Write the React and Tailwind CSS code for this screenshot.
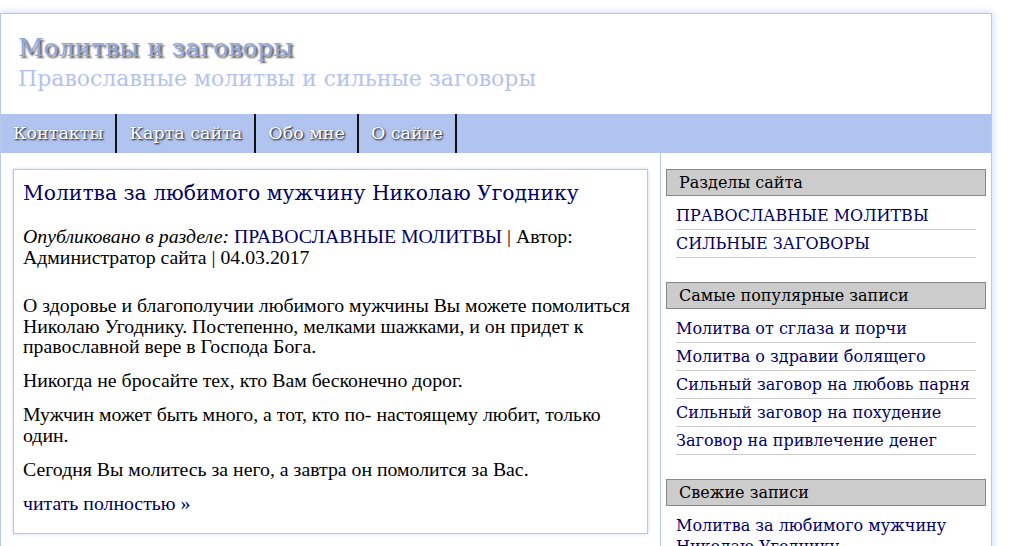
import React from "react";

const serif = { fontFamily: '"DejaVu Serif", serif' };

const navItems = ["Контакты", "Карта сайта", "Обо мне", "О сайте"];

const widgets = [
  { title: "Разделы сайта", links: ["ПРАВОСЛАВНЫЕ МОЛИТВЫ", "СИЛЬНЫЕ ЗАГОВОРЫ"] },
  {
    title: "Самые популярные записи",
    links: [
      "Молитва от сглаза и порчи",
      "Молитва о здравии болящего",
      "Сильный заговор на любовь парня",
      "Сильный заговор на похудение",
      "Заговор на привлечение денег",
    ],
  },
  { title: "Свежие записи", links: ["Молитва за любимого мужчину Николаю Угоднику"] },
];

function Widget({ title, links }) {
  return (
    <div className="mb-[24px]">
      <h3 className="border border-[#888] bg-[#cccccc] px-3 h-[27px] leading-[25px] text-[16px] text-black">
        {title}
      </h3>
      <ul className="px-[10px] pt-[6px]">
        {links.map((l) => (
          <li key={l} className="border-b border-[#cccccc] py-[3px] leading-[21px] text-[16px]">
            <a href="#" className="text-[#000066]">{l}</a>
          </li>
        ))}
      </ul>
    </div>
  );
}

export default function App() {
  return (
    <div className="bg-white h-[546px] overflow-hidden pt-[13px]" style={serif}>
      <div className="w-[992px] border border-[#b6c8f0] shadow-[0_0_8px_#c5d3f5]">
        <header className="h-[100px] px-[17px] pt-[19px]">
          <h1 className="text-[25px] leading-[30px] text-[#8fa6df] [text-shadow:2px_2px_2px_#555]">
            Молитвы и заговоры
          </h1>
          <p className="mt-[2px] text-[22px] leading-[28px] text-[#b3c3ee]">
            Православные молитвы и сильные заговоры
          </p>
        </header>
        <nav className="flex h-[39px] bg-[#b0c4ef]">
          {navItems.map((n) => (
            <a
              key={n}
              href="#"
              className="border-r-2 border-[#111] px-[12px] leading-[39px] text-[17.5px] text-white [text-shadow:1px_1px_2px_#000]"
            >
              {n}
            </a>
          ))}
        </nav>
        <div className="flex">
          <main className="w-[660px] border-r border-[#b6c8f0] px-[12px] pt-[16px] pb-[10px]">
            <article
              className="border border-[#b6c8f0] shadow-[0_0_3px_#c5d3f5] pl-[9px] pr-[8px] pt-[8px] pb-[20px] text-[19.8px] leading-[20.5px] text-black"
              style={{ fontFamily: '"Liberation Serif", serif' }}
            >
              <h2 className="text-[20.3px] leading-[30px] text-[#000066]" style={serif}>
                Молитва за любимого мужчину Николаю Угоднику
              </h2>
              <p className="mt-[18px] mb-[28px]">
                <em>Опубликовано в разделе:</em>{" "}
                <a href="#" className="text-[#000066]">ПРАВОСЛАВНЫЕ МОЛИТВЫ</a> | Автор: Администратор сайта | 04.03.2017
              </p>
              <p className="mb-[13.5px]">
                О здоровье и благополучии любимого мужчины Вы можете помолиться Николаю Угоднику. Постепенно, мелками шажками, и он придет к православной вере в Господа Бога.
              </p>
              <p className="mb-[13.5px]">Никогда не бросайте тех, кто Вам бесконечно дорог.</p>
              <p className="mb-[13.5px]">
                Мужчин может быть много, а тот, кто по- настоящему любит, только один.
              </p>
              <p className="mb-[13.5px]">Сегодня Вы молитесь за него, а завтра он помолится за Вас.</p>
              <a href="#" className="text-[#000066]">читать полностью »</a>
            </article>
          </main>
          <aside className="flex-1 px-[5px] pt-[16px]">
            {widgets.map((w) => (
              <Widget key={w.title} {...w} />
            ))}
          </aside>
        </div>
      </div>
    </div>
  );
}
